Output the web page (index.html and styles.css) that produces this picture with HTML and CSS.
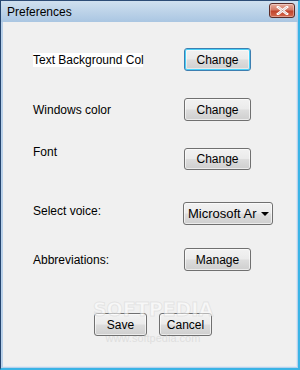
FILE: index.html
```html
<!DOCTYPE html>
<html lang="en">
<head>
    <meta charset="UTF-8">
    <title>Preferences</title>
    <link rel="stylesheet" href="styles.css">
</head>
<body>
    <div class="window">
        <div class="titlebar">
            <span class="title">Preferences</span>
            <button class="close" type="button">
                <svg width="13" height="9" viewBox="0 0 13 9">
                    <path d="M2 1 L11 8 M11 1 L2 8" stroke="#fff" stroke-width="2.6" stroke-linecap="square"/>
                    <path d="M2 1 L11 8 M11 1 L2 8" stroke="#7a3327" stroke-width="0.6" fill="none" opacity="0.5"/>
                </svg>
            </button>
        </div>
        <div class="content">
            <div class="row row-first">
                <span class="label label-selected">Text Background Col</span>
                <button class="btn btn-focus" type="button">Change</button>
            </div>
            <div class="row row-second">
                <span class="label">Windows color</span>
                <button class="btn" type="button">Change</button>
            </div>
            <div class="row row-font">
                <span class="label label-top">Font</span>
                <button class="btn btn-short" type="button">Change</button>
            </div>
            <div class="row row-voice">
                <span class="label label-up">Select voice:</span>
                <div class="combo">
                    <span class="combo-text">Microsoft Ar</span>
                    <span class="combo-arrow"></span>
                </div>
            </div>
            <div class="row row-abbr">
                <span class="label">Abbreviations:</span>
                <button class="btn" type="button">Manage</button>
            </div>
            <div class="actions">
                <button class="btn btn-action" type="button">Save</button>
                <button class="btn btn-action" type="button">Cancel</button>
            </div>
            <div class="watermark">
                <span class="wm-big">SOFTPEDIA</span>
                <span class="wm-small">www.softpedia.com</span>
            </div>
        </div>
    </div>
</body>
</html>
```

FILE: styles.css
```css
body {
    margin: 0;
    font-family: "Liberation Sans", Arial, sans-serif;
    font-size: 12px;
    color: #000;
    background: #fff;
}
.window {
    width: 300px;
    height: 370px;
    box-sizing: border-box;
    display: flex;
    flex-direction: column;
    background: #b9d1ea;
    border-left: 1px solid #24456f;
    border-top: 1px solid #2d4c76;
    border-right: 2px solid #3ab4e6;
    border-bottom: 2px solid #3ab4e6;
}
.titlebar {
    height: 21px;
    display: flex;
    align-items: center;
    justify-content: space-between;
    padding: 0 3px 0 6px;
    background: linear-gradient(#d0e0ef, #aac6e2);
}
.title {
    font-size: 12px;
    color: #000;
    padding-top: 1px;
}
.close {
    width: 26px;
    height: 15px;
    margin-top: -2px;
    padding: 0;
    display: flex;
    align-items: center;
    justify-content: center;
    border: 1px solid #5b2c28;
    border-radius: 3px;
    background: linear-gradient(#e7ad9f 0%, #d47a66 45%, #c0432c 55%, #d46a4f 100%);
    box-shadow: inset 0 0 0 1px rgba(255, 255, 255, 0.35);
}
.content {
    position: relative;
    flex: 1;
    margin: 0 1px 1px 2px;
    padding: 26px 0 0 30px;
    background: #f0f0f0;
    border-right: 1px solid #dde9f5;
    border-bottom: 1px solid #dde9f5;
}
.row {
    display: flex;
    align-items: center;
}
.row-second {
    margin-top: 27px;
}
.row-font {
    margin-top: 27px;
    align-items: flex-start;
}
.row-voice {
    margin-top: 32px;
}
.row-abbr {
    margin-top: 23px;
}
.label {
    width: 151px;
    white-space: nowrap;
    line-height: 14px;
}
.label-selected {
    width: 110px;
    margin-right: 41px;
    background: #fff;
}
.label-top {
    margin-top: -3px;
}
.label-up {
    margin-top: -6px;
}
.btn {
    width: 67px;
    height: 23px;
    padding: 0;
    font-family: "Liberation Sans", Arial, sans-serif;
    font-size: 12px;
    color: #000;
    border: 1px solid #707070;
    border-radius: 3px;
    background: linear-gradient(#f2f2f2 0%, #ebebeb 48%, #dddddd 52%, #cfcfcf 100%);
    box-shadow: inset 0 0 0 1px rgba(255, 255, 255, 0.6);
}
.btn-short {
    height: 22px;
}
.btn-focus {
    border-color: #3c7fb1;
    box-shadow: inset 0 0 0 1px #48d0f8, inset 0 0 0 2px rgba(255, 255, 255, 0.5);
}
.combo {
    width: 90px;
    height: 23px;
    box-sizing: border-box;
    margin-left: -1px;
    display: flex;
    align-items: center;
    border: 1px solid #707070;
    border-radius: 3px;
    background: linear-gradient(#f2f2f2 0%, #ebebeb 48%, #dddddd 52%, #cfcfcf 100%);
    box-shadow: inset 0 0 0 1px rgba(255, 255, 255, 0.6);
}
.combo-text {
    width: 67px;
    padding-left: 4px;
    white-space: nowrap;
    font-size: 13px;
}
.combo-arrow {
    margin-left: 6px;
    width: 0;
    height: 0;
    border-left: 4px solid transparent;
    border-right: 4px solid transparent;
    border-top: 4px solid #000;
}
.actions {
    display: flex;
    gap: 12px;
    margin: 42px 0 0 61px;
}
.btn-action {
    width: 53px;
}
.watermark {
    position: absolute;
    left: 88px;
    top: 276px;
    width: 124px;
    display: flex;
    flex-direction: column;
    align-items: center;
    pointer-events: none;
}
.wm-big {
    font-family: "DejaVu Sans", sans-serif;
    font-weight: bold;
    font-size: 19px;
    color: rgba(255, 255, 255, 0.55);
    -webkit-text-stroke: 1px rgba(190, 190, 190, 0.3);
}
.wm-small {
    margin-top: 12px;
    font-size: 11px;
    color: rgba(205, 205, 205, 0.5);
}
```
